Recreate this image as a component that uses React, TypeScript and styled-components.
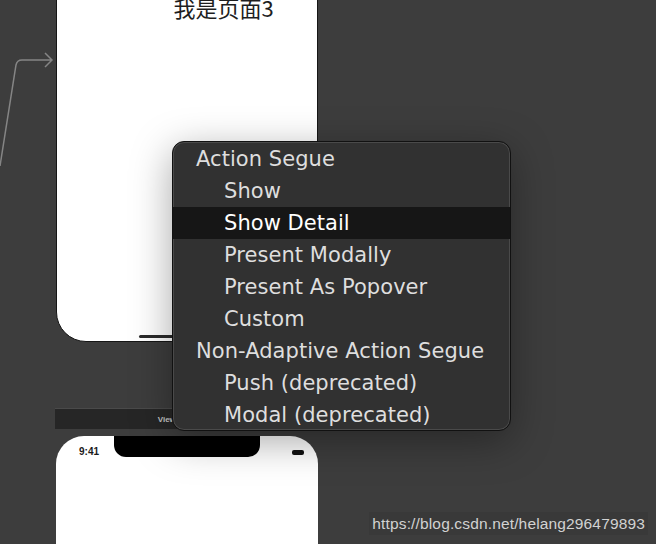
import React from "react";
import styled, { createGlobalStyle } from "styled-components";

const Global = createGlobalStyle`
  html, body { margin: 0; padding: 0; background: #3d3d3d; }
  body { font-family: "DejaVu Sans", "Liberation Sans", sans-serif; }
`;

const Canvas = styled.div`
  position: relative;
  width: 656px;
  height: 544px;
  overflow: hidden;
  background: #3d3d3d;
`;

const SegueArrow = styled.svg`
  position: absolute;
  left: 0;
  top: 40px;
`;

const PhoneTop = styled.div`
  position: absolute;
  left: 56px;
  top: -60px;
  width: 262px;
  height: 402px;
  box-sizing: border-box;
  background: #fff;
  border: 1px solid #161616;
  border-radius: 0 0 30px 30px;
  display: flex;
  flex-direction: column;
  align-items: center;
`;

const PageTitle = styled.div`
  margin-top: 53px;
  margin-left: 73px;
  font-family: "Noto Sans CJK SC", "Liberation Sans", sans-serif;
  font-size: 22px;
  line-height: 26px;
  color: #1e1e1e;
`;

const HomeIndicator = styled.div`
  margin-top: auto;
  margin-bottom: 3px;
  margin-left: 8px;
  width: 104px;
  height: 3px;
  border-radius: 2px;
  background: #2a2a2a;
`;

const SceneBottom = styled.div`
  position: absolute;
  left: 55px;
  top: 408px;
  width: 264px;
  display: flex;
  flex-direction: column;
  gap: 7px;
`;

const SceneBar = styled.div`
  height: 20px;
  background: #262626;
  border-top: 1px solid #4a4a4a;
  display: flex;
  align-items: center;
  justify-content: center;
  font-family: "Liberation Sans", sans-serif;
  font-weight: 700;
  font-size: 8px;
  color: #c8c8c8;
`;

const PhoneBottom = styled.div`
  margin-left: 1px;
  width: 262px;
  height: 140px;
  background: #fff;
  border-radius: 28px 28px 0 0;
  display: flex;
  align-items: flex-start;
  padding: 0 14px 0 23px;
  box-sizing: border-box;
`;

const StatusTime = styled.div`
  margin-top: 10px;
  width: 21px;
  font-family: "Liberation Sans", sans-serif;
  font-weight: 700;
  font-size: 10px;
  color: #1a1a1a;
`;

const Notch = styled.div`
  width: 146px;
  height: 21px;
  background: #000;
  border-radius: 0 0 12px 12px;
  margin-left: 14px;
`;

const Battery = styled.div`
  margin-top: 14px;
  margin-left: auto;
  width: 12px;
  height: 5px;
  border-radius: 2px;
  background: #111;
`;

const Menu = styled.div`
  position: absolute;
  left: 172px;
  top: 141px;
  width: 339px;
  height: 290px;
  box-sizing: border-box;
  padding: 1px 0;
  background: #313131;
  border: 1px solid #111;
  border-radius: 12px;
  box-shadow: inset 0 0 0 1px #4a4a4a, 0 10px 40px rgba(0, 0, 0, 0.35);
  display: flex;
  flex-direction: column;
  overflow: hidden;
`;

const Item = styled.div<{ $indent: boolean; $selected?: boolean }>`
  height: 32px;
  flex: none;
  display: flex;
  align-items: center;
  padding-left: ${(p) => (p.$indent ? 51 : 23)}px;
  font-size: 21px;
  letter-spacing: 0.05px;
  color: ${(p) => (p.$selected ? "#ffffff" : "#dedede")};
  background: ${(p) => (p.$selected ? "#161616" : "transparent")};
  white-space: nowrap;
`;

const Watermark = styled.div`
  position: absolute;
  right: 8px;
  bottom: 9px;
  padding: 3px 3px;
  background: #393939;
  font-family: "Liberation Sans", sans-serif;
  font-size: 15.5px;
  letter-spacing: 0.15px;
  line-height: 17px;
  color: #d2d2d2;
`;

const items: { label: string; indent: boolean; selected?: boolean }[] = [
  { label: "Action Segue", indent: false },
  { label: "Show", indent: true },
  { label: "Show Detail", indent: true, selected: true },
  { label: "Present Modally", indent: true },
  { label: "Present As Popover", indent: true },
  { label: "Custom", indent: true },
  { label: "Non-Adaptive Action Segue", indent: false },
  { label: "Push (deprecated)", indent: true },
  { label: "Modal (deprecated)", indent: true },
];

export default function App() {
  return (
    <Canvas>
      <Global />
      <SegueArrow width="56" height="130" viewBox="0 0 56 130">
        <path
          d="M0 126 L16 25 Q17 20 22 20 L52 20 M45 13 L52 20 L45 27"
          fill="none"
          stroke="#858585"
          strokeWidth="1.5"
        />
      </SegueArrow>
      <PhoneTop>
        <PageTitle>我是页面3</PageTitle>
        <HomeIndicator />
      </PhoneTop>
      <SceneBottom>
        <SceneBar>View Controller</SceneBar>
        <PhoneBottom>
          <StatusTime>9:41</StatusTime>
          <Notch />
          <Battery />
        </PhoneBottom>
      </SceneBottom>
      <Menu>
        {items.map((it) => (
          <Item key={it.label} $indent={it.indent} $selected={it.selected}>
            {it.label}
          </Item>
        ))}
      </Menu>
      <Watermark>https://blog.csdn.net/helang296479893</Watermark>
    </Canvas>
  );
}
